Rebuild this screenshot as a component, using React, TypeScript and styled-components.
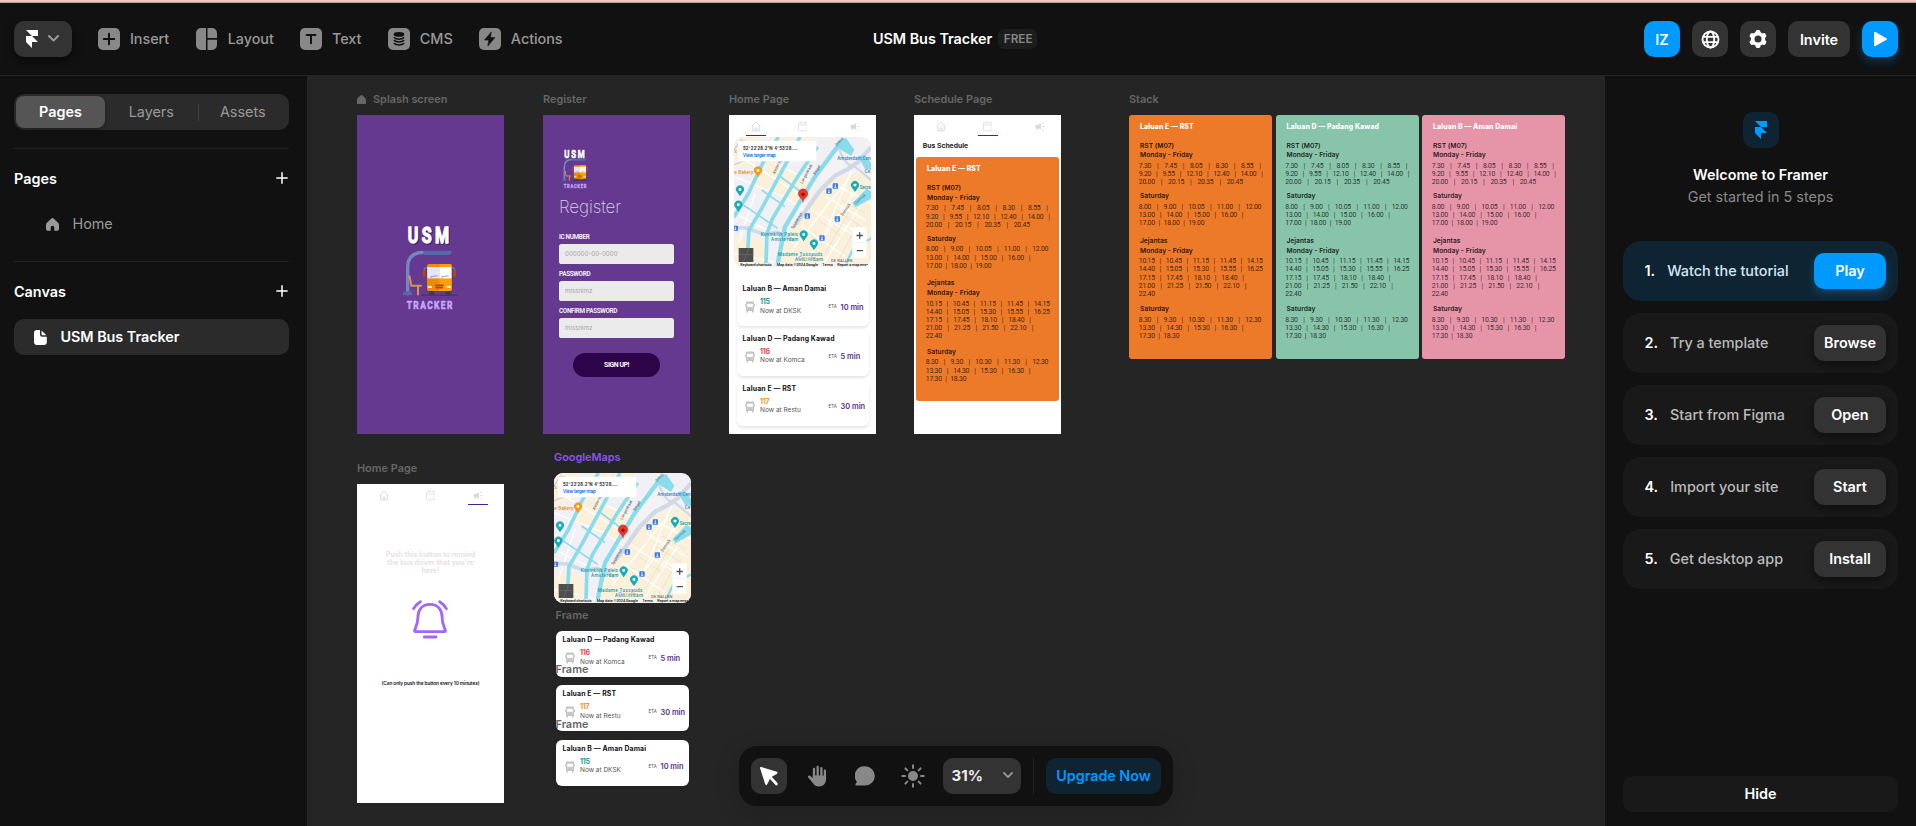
import React from 'react';
import styled, { createGlobalStyle, css } from 'styled-components';

const GlobalStyle = createGlobalStyle`
  * { box-sizing: border-box; }
  html, body { margin: 0; padding: 0; background: #111; }
  body { font-family: Inter, "Liberation Sans", sans-serif; font-size: 14.4px; color: #fff; overflow: hidden; }
  button { font: inherit; border: 0; padding: 0; margin: 0; color: inherit; background: none; }
  svg { display: block; flex: none; }
`;

/* ---------- shell ---------- */

const Shell = styled.div`
  width: 1916px;
  height: 826px;
  display: flex;
  flex-direction: column;
  background: #111;
  border-top: 2px solid #ebc7c0;
`;

const Header = styled.header`
  flex: none;
  height: 74px;
  display: grid;
  grid-template-columns: 1fr auto 1fr;
  align-items: center;
  padding: 0 18px 0 14px;
  border-top: 1px solid #b99c97;
  border-bottom: 1px solid #252525;
`;

const Body = styled.div`
  flex: 1;
  min-height: 0;
  display: flex;
`;

/* ---------- header ---------- */

const Tools = styled.nav`
  display: flex;
  align-items: center;
`;

const LogoButton = styled.button`
  width: 58px;
  height: 36px;
  border-radius: 10px;
  background: #333;
  box-shadow: 0 4px 8px rgba(0, 0, 0, 0.5);
  display: flex;
  align-items: center;
  gap: 10px;
  padding-left: 12px;
  margin-right: 26px;
`;

const Tool = styled.button<{ $gap: number }>`
  display: flex;
  align-items: center;
  gap: 10px;
  margin-right: ${(p) => p.$gap}px;
  color: #999;
  font-weight: 500;
  letter-spacing: -0.05px;
`;

const ToolName = styled.span`
  padding-bottom: 2px;
`;

const Project = styled.div`
  display: flex;
  align-items: center;
  gap: 6px;
  padding: 0 2px 1px 0;
  font-weight: 600;
  letter-spacing: -0.02px;
`;

const Badge = styled.span`
  height: 20px;
  padding: 0 4.5px 0 5.5px;
  border-radius: 6px;
  background: #1d1d1d;
  color: #888;
  font-size: 11.8px;
  font-weight: 600;
  line-height: 20px;
`;

const HeaderActions = styled.div`
  display: flex;
  justify-content: flex-end;
  gap: 12px;
`;

const ActionButton = styled.button<{ $blue?: boolean; $width?: number; $glow?: boolean }>`
  width: ${(p) => p.$width ?? 36}px;
  height: 36px;
  border-radius: 10px;
  display: flex;
  align-items: center;
  justify-content: center;
  font-weight: 600;
  background: ${(p) => (p.$blue ? '#0099ff' : '#333')};
  ${(p) => p.$glow && css`box-shadow: 0 4px 10px rgba(0, 153, 255, 0.3);`}
`;

/* ---------- left sidebar ---------- */

const Sidebar = styled.aside`
  flex: none;
  width: 307px;
  padding: 18px 18px 0 14px;
`;

const Tabs = styled.div`
  height: 36px;
  margin-bottom: 18px;
  padding: 2px;
  border-radius: 10px;
  background: #2b2b2b;
  display: grid;
  grid-template-columns: 89px 92.5px 1px 1fr;
  align-items: center;
`;

const Tab = styled.button<{ $active?: boolean }>`
  height: 32px;
  padding-bottom: 1.5px;
  border-radius: 8px;
  color: ${(p) => (p.$active ? '#fff' : '#999')};
  font-weight: ${(p) => (p.$active ? 600 : 400)};
  background: ${(p) => (p.$active ? '#555' : 'transparent')};
  box-shadow: ${(p) => (p.$active ? '0 2px 5px rgba(0,0,0,.25)' : 'none')};
`;

const TabDivider = styled.i`
  height: 17px;
  background: #444;
`;

const Section = styled.section`
  height: 113px;
  border-top: 1px solid #222;
`;

const SectionTitle = styled.div`
  height: 58px;
  display: flex;
  align-items: center;
  justify-content: space-between;
  padding-right: 1.5px;
  font-weight: 600;
`;

const TreeRow = styled.div<{ $active?: boolean }>`
  height: 36px;
  margin-top: -1px;
  border-radius: 10px;
  display: flex;
  align-items: center;
  color: ${(p) => (p.$active ? '#fff' : '#999')};
  font-weight: ${(p) => (p.$active ? 600 : 400)};
  letter-spacing: -0.05px;
  background: ${(p) => (p.$active ? '#2b2b2b' : 'transparent')};
  padding-left: ${(p) => (p.$active ? 20 : 32)}px;
  gap: ${(p) => (p.$active ? 13.5 : 13.5)}px;
`;

const TreeName = styled.span`
  padding-bottom: 1.5px;
`;

/* ---------- right panel ---------- */

const Panel = styled.aside`
  flex: none;
  width: 311px;
  padding: 36px 18px 14px;
  display: flex;
  flex-direction: column;
  align-items: stretch;
`;

const Welcome = styled.div`
  height: 129px;
  display: flex;
  flex-direction: column;
  align-items: center;
  line-height: 22px;
`;

const WelcomeIcon = styled.div`
  width: 36px;
  height: 36px;
  border-radius: 10px;
  margin-bottom: 16px;
  background: #0f2432;
  display: flex;
  align-items: center;
  justify-content: center;
`;

const Strong = styled.div`
  font-weight: 600;
`;

const Muted = styled.div`
  color: #888;
`;

const Steps = styled.div`
  flex: 1;
  display: flex;
  flex-direction: column;
  gap: 12px;
`;

const Step = styled.div<{ $first?: boolean }>`
  height: 60px;
  flex: none;
  border-radius: 18px;
  background: ${(p) => (p.$first ? '#0f2432' : '#191919')};
  display: flex;
  align-items: center;
  padding: 0 12px 0 21.5px;
`;

const StepNumber = styled.span`
  font-weight: 600;
  margin-right: 12px;
  padding-bottom: 1.5px;
`;

const StepText = styled.span<{ $first?: boolean }>`
  flex: 1;
  font-weight: 500;
  padding-bottom: 1.5px;
  color: ${(p) => (p.$first ? '#d3e8f5' : '#bbb')};
`;

const StepButton = styled.button<{ $first?: boolean }>`
  width: 72px;
  height: 36px;
  padding-bottom: 1.5px;
  border-radius: 10px;
  font-weight: 600;
  background: ${(p) => (p.$first ? '#0099ff' : '#333')};
  box-shadow: 0 4px 9px ${(p) => (p.$first ? 'rgba(0,153,255,.3)' : 'rgba(0,0,0,.45)')};
`;

const HideButton = styled.button`
  height: 36px;
  padding-bottom: 1px;
  border-radius: 10px;
  background: #191919;
  font-weight: 600;
`;

/* ---------- canvas ---------- */

const Canvas = styled.main`
  flex: 1;
  position: relative;
  overflow: hidden;
  background: #252525;
`;

const Node = styled.div<{ $x: number; $y: number; $w: number }>`
  position: absolute;
  left: ${(p) => p.$x}px;
  top: ${(p) => p.$y}px;
  width: ${(p) => p.$w}px;
`;

const NodeLabel = styled.div<{ $purple?: boolean }>`
  height: 18px;
  margin-bottom: 7px;
  display: flex;
  align-items: center;
  gap: 7px;
  font-size: 10.9px;
  font-weight: 600;
  white-space: nowrap;
  color: ${(p) => (p.$purple ? '#8855ee' : '#666')};
  position: relative;
  z-index: 1;
`;

const Artboard = styled.div<{ $bg?: string }>`
  height: 318.5px;
  background: ${(p) => p.$bg ?? '#fff'};
  display: flex;
  flex-direction: column;
  overflow: hidden;
`;

const SplashBoard = styled(Artboard)`
  align-items: center;
  padding: 107.5px 1px 0 0;
`;

const RegisterBoard = styled(Artboard)`
  padding: 33px 16px 0;
`;

const CompactLogo = styled.div`
  padding-left: 2.2px;
`;

const RegisterTitle = styled.div`
  margin-top: 3.5px;
  height: 34.5px;
  font-size: 17px;
  font-weight: 200;
  line-height: 29px;
  letter-spacing: -0.1px;
  color: #dccdea;
`;

const FieldLabel = styled.div`
  height: 10px;
  margin-top: 6.8px;
  font: 700 6.4px/7.5px "Liberation Sans Narrow", Roboto, sans-serif;
  letter-spacing: -0.35px;
  color: #f3ecf8;
`;

const Field = styled.div`
  height: 20px;
  border-radius: 2.6px;
  background: #ebebeb;
  color: #a5a5a5;
  font-size: 6.2px;
  line-height: 19.5px;
  padding-left: 6px;
`;

const SignUp = styled.div`
  width: 87.5px;
  height: 24px;
  margin: 15.2px auto 0;
  border-radius: 12px;
  background: #2d0449;
  text-align: center;
  font: 700 6.8px/24px "Liberation Sans Narrow", Roboto, sans-serif;
  letter-spacing: -0.4px;
`;

const PhoneTabs = styled.div<{ $last: number }>`
  flex: none;
  height: 22px;
  display: grid;
  grid-template-columns: 26.5px 47px ${(p) => p.$last}px;
  color: #d9d9d9;
`;

const PhoneTab = styled.div<{ $active?: boolean }>`
  justify-self: end;
  width: 20px;
  margin-right: -10px;
  height: 20.7px;
  padding-top: 6px;
  display: flex;
  justify-content: center;
  border-bottom: 1.2px solid ${(p) => (p.$active ? '#4a2191' : 'transparent')};
`;

const MapHolder = styled.div`
  width: 137px;
  height: 130px;
  border-radius: 9px;
  overflow: hidden;
  margin: 0 auto;
  flex: none;
`;

const RouteList = styled.div`
  padding: 13px 7.5px 0 8px;
  display: flex;
  flex-direction: column;
  gap: 3.8px;
`;

const RouteCard = styled.div<{ $inset?: boolean }>`
  flex: none;
  height: 46px;
  border-radius: 6px;
  background: #fff;
  padding: 3px 0 0 ${(p) => (p.$inset ? 7 : 5.6)}px;
  box-shadow: 0 2px 3px rgba(0, 0, 0, 0.1);
  color: #222;
`;

const RouteTitle = styled.div`
  height: 12px;
  font-size: 6.9px;
  font-weight: 700;
  line-height: 12px;
  letter-spacing: 0.12px;
  white-space: nowrap;
  color: #111;
`;

const RouteBody = styled.div`
  display: grid;
  grid-template-columns: 15px 68.500px 12px 1fr;
  align-items: center;
  height: 24px;
  padding-left: 2.5px;
  white-space: nowrap;
`;

const RouteInfo = styled.div`
  font-size: 6.5px;
  line-height: 8.5px;
  color: #555;
  padding-bottom: 1px;
`;

const RouteNumber = styled.div<{ $color: string }>`
  font-size: 7px;
  font-weight: 700;
  letter-spacing: -0.3px;
  color: ${(p) => p.$color};
`;

const Eta = styled.span`
  font: 4.6px Roboto, sans-serif;
  color: #555;
  padding-bottom: 1px;
`;

const Minutes = styled.span`
  font-size: 7.4px;
  font-weight: 600;
  color: #55308c;
`;

const ScheduleHeading = styled.div`
  height: 20.4px;
  padding-left: 8.8px;
  font-size: 6.8px;
  font-weight: 700;
  line-height: 18px;
  color: #222;
`;

const Timetable = styled.div<{ $bg: string }>`
  width: 143px;
  height: 244px;
  flex: none;
  border-radius: 3px;
  background: ${(p) => p.$bg};
  padding: 7px 0 0 9.8px;
  color: rgba(0, 0, 0, 0.85);
  white-space: nowrap;
`;

const TimetableTitle = styled.div`
  padding-left: 1.2px;
  height: 10px;
  font-size: 6.9px;
  font-weight: 800;
  line-height: 10px;
  letter-spacing: 0.12px;
  color: #fff;
`;

const DayTitle = styled.div<{ $top: number }>`
  padding-left: 1.2px;
  margin-top: ${(p) => p.$top}px;
  height: 10px;
  font-size: 6.7px;
  font-weight: 600;
  line-height: 10px;
`;

const TimeLine = styled.div<{ $w: number }>`
  width: ${(p) => p.$w}px;
  height: 8.2px;
  display: flex;
  justify-content: space-between;
  font: 400 6.9px/8.2px Roboto, sans-serif;
  letter-spacing: -0.25px;
  color: rgba(0, 0, 0, 0.76);
`;

const Times = styled.div`
  padding-top: 1.7px;
`;

const StackRow = styled.div`
  display: flex;
  gap: 3.5px;
`;

const ScheduleBoard = styled(Artboard)`
  ${Timetable} { margin-left: 2px; }
`;

const ReminderText = styled.div`
  margin-top: 44.8px;
  text-align: center;
  font-size: 7px;
  font-weight: 700;
  line-height: 8.3px;
  color: #e6e3e3;
`;

const BellHolder = styled.div`
  margin-top: 24.7px;
  padding-right: 1px;
  display: flex;
  justify-content: center;
`;

const ReminderNote = styled.div`
  margin-top: 39.5px;
  text-align: center;
  font-size: 4.8px;
  font-weight: 600;
  line-height: 9px;
  letter-spacing: -0.1px;
  color: #111;
`;

/* ---------- floating toolbar ---------- */

const Dock = styled.div`
  position: absolute;
  left: 432px;
  bottom: 20px;
  width: 434px;
  height: 60px;
  padding: 12px;
  border-radius: 18px;
  background: #111;
  box-shadow: 0 6px 24px rgba(0, 0, 0, 0.18);
  display: flex;
  align-items: center;
  z-index: 2;
`;

const DockButton = styled.button<{ $active?: boolean }>`
  width: 36px;
  height: 36px;
  margin-right: 12px;
  border-radius: 10px;
  background: ${(p) => (p.$active ? '#333' : 'transparent')};
  color: ${(p) => (p.$active ? '#fff' : '#888')};
  display: flex;
  align-items: center;
  justify-content: center;
`;

const ZoomSelect = styled.button`
  width: 78px;
  height: 36px;
  border-radius: 10px;
  padding: 0 8px 1px 8.5px;
  background: #333;
  color: #eee;
  font-size: 15px;
  font-weight: 700;
  display: flex;
  align-items: center;
  justify-content: space-between;
`;

const DockDivider = styled.i`
  width: 1px;
  height: 36px;
  margin: 0 12px;
  background: #222;
`;

const Upgrade = styled.button`
  width: 115px;
  height: 36px;
  padding-bottom: 1px;
  border-radius: 10px;
  background: #0f2432;
  color: #0099ff;
  font-weight: 600;
  letter-spacing: -0.05px;
`;

/* ---------- icons ---------- */

const FramerMark = ({ w, h, color }: { w: number; h: number; color: string }) => (
  <svg width={w} height={h} viewBox="0 0 12 18" fill={color}>
    <path d="M0 0h12v6H6zM0 6h6l6 6H6v6l-6-6z" />
  </svg>
);

const Chevron = ({ s = 11, color = '#999' }) => (
  <svg width={s} height={s * 0.64} viewBox="0 0 11 7" fill="none" stroke={color} strokeWidth="2" strokeLinecap="round" strokeLinejoin="round">
    <path d="M1 1l4.5 4.6L10 1" />
  </svg>
);

const Tile = ({ children }: { children?: React.ReactNode }) => (
  <svg width="22" height="22" viewBox="0 0 22 22">
    <rect width="22" height="22" rx="5" fill="#888" />
    {children}
  </svg>
);

const InsertIcon = () => (
  <Tile><path d="M11 5.8v10.4M5.8 11h10.4" stroke="#111" strokeWidth="2" strokeLinecap="round" /></Tile>
);
const TextIcon = () => (
  <Tile><path d="M6.6 6.9h8.8M11 7v8.3" stroke="#111" strokeWidth="2" strokeLinecap="round" /></Tile>
);
const ActionsIcon = () => (
  <Tile><path d="M12.3 3.9 5.5 12h4.3l-.9 6 7-8.4h-4.5z" fill="#111" stroke="#111" strokeWidth=".6" strokeLinejoin="round" /></Tile>
);
const CmsIcon = () => (
  <Tile>
    <ellipse cx="11" cy="6.4" rx="5.3" ry="2.4" fill="#111" />
    <path d="M6.3 9.7c1.6 1.900 7.800 1.900 9.400 0M6.300 12.600c1.600 1.900 7.800 1.900 9.400 0M6.300 15.500c1.600 1.900 7.800 1.900 9.400 0" fill="none" stroke="#111" strokeWidth="1.500" strokeLinecap="round" />
  </Tile>
);
const LayoutIcon = () => (
  <svg width="22" height="22" viewBox="0 0 22 22" fill="#888">
    <path d="M5 0h5v22H5a5 5 0 0 1-5-5V5a5 5 0 0 1 5-5zM11.500 0h4.500a5 5 0 0 1 5 5v5H11.500zM11.500 11.800h9.500V17a5 5 0 0 1-5 5h-4.500z" />
  </svg>
);

const GlobeIcon = () => (
  <svg width="19" height="19" viewBox="0 0 19 19" fill="none" stroke="#fff" strokeWidth="1.9">
    <circle cx="9.500" cy="9.500" r="8" />
    <ellipse cx="9.500" cy="9.500" rx="3.700" ry="8" />
    <path d="M1.800 6.900h15.400M1.800 12.200h15.400" strokeWidth="1.700" />
  </svg>
);

const GearIcon = () => (
  <svg width="20" height="20" viewBox="0 0 20 20">
    <g fill="#fff">
      <circle cx="10" cy="10" r="7.200" />
      {[0, 60, 120, 180, 240, 300].map((a) => (
        <rect key={a} x="7.600" y="1" width="4.800" height="5" rx="1.700" transform={`rotate(${a} 10 10)`} />
      ))}
    </g>
    <circle cx="10" cy="10" r="3.500" fill="#333" />
  </svg>
);

const PlayIcon = () => (
  <svg width="15" height="16" viewBox="0 0 15 16" fill="#fff" stroke="#fff" strokeWidth="2" strokeLinejoin="round">
    <path d="M2 1.800v12.400L13 8z" />
  </svg>
);

const PlusIcon = () => (
  <svg width="12" height="12" viewBox="0 0 12 12" stroke="#fff" strokeWidth="1.500">
    <path d="M6 .3v11.400M.3 6h11.400" />
  </svg>
);

const HomeGlyph = ({ door = true, w = 13, color = '#999' }) => (
  <svg width={w} height={w} viewBox="0 0 13 13" fill={color}>
    {door ? (
      <path d="M5.400.5a1.700 1.700 0 0 1 2.200 0l4.500 4.300q.9.900.9 2v4.200a1.800 1.800 0 0 1-1.800 1.800H8.300V9.600a1.800 1.800 0 0 0-3.600 0v3.200H1.800A1.800 1.800 0 0 1 0 11V6.800q0-1.100.9-2z" />
    ) : (
      <path d="M5.400.5a1.700 1.700 0 0 1 2.200 0l4.500 4.300q.9.900.9 2V13H0V6.800q0-1.100.9-2z" />
    )}
  </svg>
);

const FileIcon = () => (
  <svg width="13" height="15" viewBox="0 0 13 15" fill="#fff">
    <path d="M3 0h3v4.500a2.300 2.300 0 0 0 2.300 2.300h4.500V12a3 3 0 0 1-3 3H3a3 3 0 0 1-3-3V3a3 3 0 0 1 3-3z" />
    <path d="M7.500.4l4.900 4.900H8.600a1.100 1.100 0 0 1-1.100-1.100z" />
  </svg>
);

const CursorIcon = () => (
  <svg width="20" height="20" viewBox="0 0 20 20">
    <path d="M2 2l15.500 4.800-6.400 3.800-3.900 7.400z" fill="#fff" stroke="#fff" strokeWidth="2" strokeLinejoin="round" />
    <path d="M12 12l5.500 6" stroke="#fff" strokeWidth="2.600" strokeLinecap="round" />
  </svg>
);

const HandIcon = () => (
  <svg width="20" height="22" viewBox="0 0 20 22" fill="none" stroke="#888" strokeLinecap="round">
    <path d="M7 12V3.800M10.700 11V1.800M14.400 11V3.200M17.900 12V5.600" strokeWidth="2.300" />
    <path d="M5.600 10.500h13.500V14c0 4.400-3 7.500-7 7.500-3.500 0-5-1.500-6.500-3.700L1.200 12.500c-1-1.600 1-2.800 2.200-1.600l2.400 2.300z" fill="#888" stroke="none" />
  </svg>
);

const ChatIcon = () => (
  <svg width="20" height="20" viewBox="0 0 20 20" fill="#888">
    <path d="M10.300.3a9.600 9.600 0 1 1-.2 19.200H1.600c-1.100 0-1.500-.9-.9-1.700l1.200-1.900A9.600 9.600 0 0 1 10.300.3z" />
  </svg>
);

const SunIcon = () => (
  <svg width="24" height="24" viewBox="0 0 24 24">
    <circle cx="12" cy="12" r="5" fill="#888" />
    {[0, 45, 90, 135, 180, 225, 270, 315].map((a) => (
      <path key={a} d="M12 1.300v2.700" stroke="#888" strokeWidth="2" strokeLinecap="round" transform={`rotate(${a} 12 12)`} />
    ))}
  </svg>
);

const PhoneHome = () => (
  <svg width="10" height="11" viewBox="0 0 20 22" fill="none" stroke="currentColor" strokeWidth="1.800">
    <path d="M1 11L10 2l9 9M3.500 9v11h13V9M8 20v-6h4v6" />
  </svg>
);
const PhoneCalendar = () => (
  <svg width="9.500" height="11" viewBox="0 0 19 22" fill="none" stroke="currentColor" strokeWidth="1.500">
    <rect x="1" y="3.500" width="17" height="16" rx="2" />
    <path d="M1 8h17M5 1v3M14 1v3" />
  </svg>
);
const PhoneHorn = () => (
  <svg width="10" height="11" viewBox="0 0 20 22" fill="currentColor">
    <path d="M1 8h5l6-3.500v13L6 14H5.500l1 4h-3l-1-4H1z" />
    <path d="M14 6l3-3M15 11h4M14 16l3 3" stroke="currentColor" strokeWidth="1.800" />
  </svg>
);

const BusGlyph = () => (
  <svg width="10" height="12" viewBox="0 0 20 24">
    <path d="M4 1h12q2 0 2 2v3h1.500v6H18v8h-1v3h-3v-3H6v3H3v-3H2v-8H.5V6H2V3q0-2 2-2z" fill="#c4c4c4" />
    <path d="M4.500 6h11v5.500h-11zM4.500 16h2M13.500 16h2" fill="#fff" stroke="#fff" strokeWidth="1" />
  </svg>
);

const BellIcon = () => (
  <svg width="36" height="39" viewBox="0 0 108 117" fill="none" stroke="#a265ff" strokeWidth="8.500" strokeLinecap="round" strokeLinejoin="round">
    <path d="M54 13c-25 0-36 18-36 36 0 22-5 30-10 41q-1 5 4 5h84q5 0 4-5c-5-11-10-19-10-41 0-18-11-36-36-36z" />
    <path d="M37 111h35M5 26Q13 12 25 5M103 26Q95 12 83 5" />
  </svg>
);

const BrandFont = '"Liberation Sans Narrow", Roboto, sans-serif';

/* Brand mark: bus stop, bench and bus between two lines of lettering */
const UsmLogo = ({ w, compact = false }: { w: number; compact?: boolean }) => {
  const up = compact ? 18 : 0;
  const top = compact ? 18 : 0;
  return (
    <svg width={w} height={(w * (268 - top)) / 176} viewBox={`0 ${top} 176 ${268 - top}`} fill="none">
      <g fontFamily={BrandFont} fontWeight="700" transform="scale(.72 1)" strokeLinejoin="round">
        <text x="32" y={62 + up} fontSize="67" fill="#3f2067" stroke="#3f2067" strokeWidth="4" textLength="172" lengthAdjust="spacing">USM</text>
        <text x="28" y={59 + up} fontSize="67" fill="#fff" stroke="#fff" strokeWidth="4" textLength="172" lengthAdjust="spacing">USM</text>
        <text x="24" y="259" fontSize="35" fill="#c7a6ff" stroke="#c7a6ff" strokeWidth="1.800" textLength="190" lengthAdjust="spacing">TRACKER</text>
      </g>
      <path d="M20 208V134Q20 88 68 88" stroke="#7488c4" strokeWidth="10" />
      <path d="M68 83h84q0 13-10 13H68z" fill="#566aa9" />
      <path d="M5 217q0-13 13-13h6q10 0 10 13z" fill="#566aa9" />
      <path d="M25 157l6 31h31M51 190v27" stroke="#d9934b" strokeWidth="6" />
      <path d="M60 217h110" stroke="#3d3560" strokeWidth="3" />
      <path d="M85 203h15v13H85zM134 203h14v13h-14z" fill="#3b3a52" />
      <rect x="78" y="123" width="74" height="81" rx="5" fill="#f08a00" />
      <path d="M115 123h32q5 0 5 5v71q0 5-5 5h-32z" fill="#ff9f0a" />
      <path d="M79 132h36v34H79z" fill="#e4e4fb" />
      <path d="M115 132h36v34h-36z" fill="#fff" />
      <path d="M88 164q3-6 22-5M121 164q3-6 22-5" stroke="#8b96b8" strokeWidth="3" />
      <rect x="65" y="142" width="8" height="19" rx="3" fill="#b3470c" />
      <rect x="157" y="142" width="8" height="19" rx="3" fill="#b3470c" />
      <path d="M69 142q0-9 9-8M161 142q0-9-9-8" stroke="#7488c4" strokeWidth="3" />
      <path d="M102 187h26M104 194h22" stroke="#a8500a" strokeWidth="5" />
      <path d="M79 189h14v6H82zM151 189h-14v6h11z" fill="#fff3d0" />
    </svg>
  );
};

const Pin = ({ x, y, c = '#18acb8' }: { x: number; y: number; c?: string }) => (
  <g>
    <path d={`M${x} ${y + 20}l-9-13a12 12 0 1 1 18 0z`} fill={c} />
    <rect x={x - 4} y={y - 5} width="8" height="8" rx="2" fill="#fff" />
  </g>
);

const Station = ({ x, y }: { x: number; y: number }) => (
  <g>
    <rect x={x - 8} y={y - 8} width="16" height="16" rx="2" fill="#3b7be8" />
    <path d={`M${x} ${y - 5}v10M${x - 3} ${y + 4}h6`} stroke="#fff" strokeWidth="2.500" />
  </g>
);

const CityMap = () => (
  <svg width="137" height="130" viewBox="27 81 411 390" preserveAspectRatio="none" fill="none" fontFamily="Roboto, sans-serif">
    <rect x="27" y="81" width="411" height="390" fill="#f1f0f4" />
    <g fill="#fbf1da">
      <path d="M27 81h75l30 30-60 60H27zM80 230l60-80 130 70-40 70-60-30zM27 380h60l30 20v71H27zM130 81l140 0-20 50-50 10z" />
      <path d="M200 350l120-140 118-30v291H150z" />
      <path d="M270 180l60-60 30 50-70 60z" fill="#f3f3f6" />
    </g>
    <g stroke="#fff" strokeWidth="4">
      <path d="M27 200l150 60 60 40M27 310l180 90M90 250l-50 150M150 160l120 60M60 150l160 100M200 420l160-200M240 460l160-230M290 470l120-190M330 330l108 60M260 300l150 90M230 350l130 90M320 220l118 60M380 180l-80 190M27 430l140 30M300 260l120 70" />
    </g>
    <path d="M330 300l80 50M280 330l70 50M350 270l70 40M300 430l70-120M340 450l60-110M250 370l40 30" stroke="#e2dccd" strokeWidth="2" />
    <path d="M438 112l-40 45-28 20-40 20-48 48-42 60-30 40" stroke="#d2d9e4" strokeWidth="13" />
    <path d="M27 352l40 2 45 18 45-5 50 25" stroke="#d2d9e4" strokeWidth="11" />
    <path d="M340 110q20 60 50 60l48 40" stroke="#d2d9e4" strokeWidth="7" />
    <g stroke="#8adbec" strokeWidth="11">
      <path d="M160 81l-45 75-45 95-43 70" />
      <path d="M225 81l-45 85-70 130-38 65-5 80" />
      <path d="M278 110l-60 90-75 125-17 45-3 90" />
      <path d="M345 100l-75 100-90 150-24 121" strokeWidth="13" />
      <path d="M48 280l110 75M160 195l80 60M110 240l70 50" strokeWidth="5" />
      <path d="M438 385l-50 25-25 50" strokeWidth="7" />
    </g>
    <g fill="#8adbec">
      <path d="M338 92l25-8 25 35-10 18-38-22zM398 138l22-2 18 22v22l-18-4zM424 236l14 8v22l-46 26-10-12z" />
    </g>
    <path d="M27 120l20-30 60 15M27 165l40-18" stroke="#c8cfda" strokeWidth="4" />
    <g fill="#4b5260" fontSize="12">
      <text transform="translate(150 192) rotate(-65)">Keizersg</text>
      <text transform="translate(232 222) rotate(-62)">Langestraat</text>
      <text transform="translate(270 196) rotate(-58)">Singel</text>
      <text transform="translate(205 358) rotate(-60)">Spuistraat</text>
      <text transform="translate(353 318) rotate(-55)">Damrak</text>
      <text transform="translate(336 108) rotate(-50)" fontSize="11">Droog</text>
      <text transform="translate(392 284) rotate(-42)" fill="#2b87a0">Damrak</text>
      <text x="318" y="456">DE WALLEN</text>
    </g>
    <g fontSize="14" fontWeight="500">
      <text x="337" y="149" fill="#3a80c8" textLength="100">Amsterdam Cen</text>
      <text x="419" y="188" fill="#3a80c8">Ce</text>
      <text x="28" y="193" fill="#ec8b1c" textLength="57">e Bakery</text>
      <text x="27" y="130" fill="#ec8b1c">'s</text>
      <text x="404" y="236" fill="#189aa8" textLength="33">Secre</text>
      <text x="107" y="377" fill="#189aa8" textLength="112">Koninklijk Paleis</text>
      <text x="138" y="392" fill="#189aa8" textLength="82">Amsterdam</text>
      <text x="158" y="437" fill="#189aa8" textLength="134">Madame Tussauds</text>
      <text x="210" y="453" fill="#189aa8" textLength="84">Amsterdam</text>
    </g>
    <Station x={331} y={228} /><Station x={312} y={243} /><Station x={247} y={318} />
    <Station x={337} y={327} /><Station x={291} y={384} /><Station x={31} y={355} />
    <Pin x={45} y={239} /><Pin x={40} y={285} /><Pin x={390} y={226} /><Pin x={236} y={374} /><Pin x={267} y={401} />
    <Pin x={99} y={182} c="#f29b18" />
    <path d="M234 280q-2-12-10-18a15 15 0 1 1 20 0q-8 6-10 18z" fill="#e8382d" />
    <circle cx="234" cy="253" r="5.500" fill="#9c1510" />
    <text x="220" y="449" fontSize="16" fontWeight="700" stroke="#fff" strokeWidth=".6">
      <tspan fill="#4285f4">G</tspan><tspan fill="#ea4335">o</tspan><tspan fill="#fbbc05">o</tspan><tspan fill="#4285f4">g</tspan><tspan fill="#34a853">l</tspan><tspan fill="#ea4335">e</tspan>
    </text>
    <rect x="39" y="92" width="235" height="62" rx="2" fill="#fff" />
    <text x="54" y="120" fontSize="14" fontWeight="700" fill="#333" textLength="164">52°22'28.2"N 4°53'28....</text>
    <text x="54" y="140" fontSize="14" fill="#1a73e8" stroke="#1a73e8" strokeWidth=".4" textLength="98">View larger map</text>
    <rect x="382" y="352" width="43" height="91" rx="3" fill="#fff" />
    <path d="M404 367v19M394.500 376.500h19M395 422h19" stroke="#555" strokeWidth="4" />
    <path d="M387 398h33" stroke="#e6e6e6" strokeWidth="1.500" />
    <rect x="41" y="414" width="44" height="42" fill="#4c4f4b" />
    <path d="M41 434h44M63 434l-8 22M70 414l-4 20" stroke="#6c706b" strokeWidth="2" />
    <rect x="40" y="459" width="398" height="12" fill="#f4f4f4" fillOpacity=".8" />
    <g fontSize="11.500" fill="#111" fontWeight="500">
      <text x="46" y="469" textLength="94">Keyboard shortcuts</text>
      <text x="155" y="469" textLength="124">Map data ©2024 Google</text>
      <text x="292" y="469" textLength="32">Terms</text>
      <text x="337" y="469" textLength="92">Report a map error</text>
    </g>
  </svg>
);

/* ---------- timetable data ---------- */

type Line = [number, string];
type Block = { top: number; titles: string[]; lines: Line[] };

const blocks: Block[] = [
  {
    top: 8.6,
    titles: ['RST (M07)', 'Monday - Friday'],
    lines: [
      [122, '7.30 | 7.45 | 8.05 | 8.30 | 8.55 |'],
      [124, '9.20 | 9.55 | 12.10 | 12.40 | 14.00 |'],
      [104, '20.00 | 20.15 | 20.35 | 20.45'],
    ],
  },
  {
    top: 4.6,
    titles: ['Saturday'],
    lines: [
      [122.5, '8.00 | 9.00 | 10.05 | 11.00 | 12.00'],
      [104.5, '13.00 | 14.00 | 15.00 | 16.00 |'],
      [65.5, '17.00 | 18.00 | 19.00'],
    ],
  },
  {
    top: 8.3,
    titles: ['Jejantas', 'Monday - Friday'],
    lines: [
      [124, '10.15 | 10.45 | 11.15 | 11.45 | 14.15'],
      [124, '14.40 | 15.05 | 15.30 | 15.55 | 16.25'],
      [105, '17.15 | 17.45 | 18.10 | 18.40 |'],
      [107.5, '21.00 | 21.25 | 21.50 | 22.10 |'],
      [17, '22.40'],
    ],
  },
  {
    top: 6,
    titles: ['Saturday'],
    lines: [
      [122.5, '8.30 | 9.30 | 10.30 | 11.30 | 12.30'],
      [104.5, '13.30 | 14.30 | 15.30 | 16.30 |'],
      [40.5, '17.30 | 18.30'],
    ],
  },
];

const TimetableCard = ({ title, bg }: { title: string; bg: string }) => (
  <Timetable $bg={bg}>
    <TimetableTitle>{title}</TimetableTitle>
    {blocks.map((b, i) => (
      <React.Fragment key={i}>
        {b.titles.map((t, j) => (
          <DayTitle key={t} $top={j === 0 ? b.top : -0.2}>{t}</DayTitle>
        ))}
        <Times>
          {b.lines.map(([width, text]) => (
            <TimeLine key={text} $w={width}>
              {text.split(' ').map((part, k) => <span key={k}>{part}</span>)}
            </TimeLine>
          ))}
        </Times>
      </React.Fragment>
    ))}
  </Timetable>
);

type Route = { title: string; num: string; color: string; at: string; eta: string };
const routeB: Route = { title: 'Laluan B — Aman Damai', num: '115', color: '#1d9a93', at: 'Now at DKSK', eta: '10 min' };
const routeD: Route = { title: 'Laluan D — Padang Kawad', num: '116', color: '#e5484d', at: 'Now at Komca', eta: '5 min' };
const routeE: Route = { title: 'Laluan E — RST', num: '117', color: '#f2951b', at: 'Now at Restu', eta: '30 min' };

const RouteItem = ({ route, inset }: { route: Route; inset?: boolean }) => (
  <RouteCard $inset={inset}>
    <RouteTitle>{route.title}</RouteTitle>
    <RouteBody>
      <BusGlyph />
      <RouteInfo>
        <RouteNumber $color={route.color}>{route.num}</RouteNumber>
        {route.at}
      </RouteInfo>
      <Eta>ETA</Eta>
      <Minutes>{route.eta}</Minutes>
    </RouteBody>
  </RouteCard>
);

const PhoneNav = ({ active, last = 52.5 }: { active: number; last?: number }) => (
  <PhoneTabs $last={last}>
    <PhoneTab $active={active === 0}><PhoneHome /></PhoneTab>
    <PhoneTab $active={active === 1}><PhoneCalendar /></PhoneTab>
    <PhoneTab $active={active === 2}><PhoneHorn /></PhoneTab>
  </PhoneTabs>
);

const steps = [
  ['Watch the tutorial', 'Play'],
  ['Try a template', 'Browse'],
  ['Start from Figma', 'Open'],
  ['Import your site', 'Start'],
  ['Get desktop app', 'Install'],
];

export default function App() {
  return (
    <>
      <GlobalStyle />
      <Shell>
        <Header>
          <Tools>
            <LogoButton><FramerMark w={12} h={18} color="#fff" /><Chevron /></LogoButton>
            <Tool $gap={26.500}><InsertIcon /><ToolName>Insert</ToolName></Tool>
            <Tool $gap={26.200}><LayoutIcon /><ToolName>Layout</ToolName></Tool>
            <Tool $gap={26.500}><TextIcon /><ToolName>Text</ToolName></Tool>
            <Tool $gap={26.200}><CmsIcon /><ToolName>CMS</ToolName></Tool>
            <Tool $gap={0}><ActionsIcon /><ToolName>Actions</ToolName></Tool>
          </Tools>
          <Project>USM Bus Tracker<Badge>FREE</Badge></Project>
          <HeaderActions>
            <ActionButton $blue>IZ</ActionButton>
            <ActionButton><GlobeIcon /></ActionButton>
            <ActionButton><GearIcon /></ActionButton>
            <ActionButton $width={62}>Invite</ActionButton>
            <ActionButton $blue $glow><PlayIcon /></ActionButton>
          </HeaderActions>
        </Header>
        <Body>
          <Sidebar>
            <Tabs>
              <Tab $active>Pages</Tab>
              <Tab>Layers</Tab>
              <TabDivider />
              <Tab>Assets</Tab>
            </Tabs>
            <Section>
              <SectionTitle>Pages<PlusIcon /></SectionTitle>
              <TreeRow><HomeGlyph /><TreeName>Home</TreeName></TreeRow>
            </Section>
            <Section>
              <SectionTitle>Canvas<PlusIcon /></SectionTitle>
              <TreeRow $active><FileIcon /><TreeName>USM Bus Tracker</TreeName></TreeRow>
            </Section>
          </Sidebar>

          <Canvas>
            <Node $x={50} $y={14} $w={147}>
              <NodeLabel><HomeGlyph door={false} w={9} color="#666" />Splash screen</NodeLabel>
              <SplashBoard $bg="#64398f"><UsmLogo w={58.700} /></SplashBoard>
            </Node>

            <Node $x={236} $y={14} $w={147}>
              <NodeLabel>Register</NodeLabel>
              <RegisterBoard $bg="#64398f">
                <CompactLogo><UsmLogo w={29} compact /></CompactLogo>
                <RegisterTitle>Register</RegisterTitle>
                <FieldLabel>IC NUMBER</FieldLabel>
                <Field>000000-00-0000</Field>
                <FieldLabel>PASSWORD</FieldLabel>
                <Field>missnimz</Field>
                <FieldLabel>CONFIRM PASSWORD</FieldLabel>
                <Field>missnimz</Field>
                <SignUp>SIGN UP!</SignUp>
              </RegisterBoard>
            </Node>

            <Node $x={422} $y={14} $w={147}>
              <NodeLabel>Home Page</NodeLabel>
              <Artboard>
                <PhoneNav active={0} />
                <MapHolder><CityMap /></MapHolder>
                <RouteList>
                  <RouteItem route={routeB} />
                  <RouteItem route={routeD} />
                  <RouteItem route={routeE} />
                </RouteList>
              </Artboard>
            </Node>

            <Node $x={607} $y={14} $w={147}>
              <NodeLabel>Schedule Page</NodeLabel>
              <ScheduleBoard>
                <PhoneNav active={1} />
                <ScheduleHeading>Bus Schedule</ScheduleHeading>
                <TimetableCard title="Laluan E — RST" bg="#ec7a28" />
              </ScheduleBoard>
            </Node>

            <Node $x={822} $y={14} $w={436}>
              <NodeLabel>Stack</NodeLabel>
              <StackRow>
                <TimetableCard title="Laluan E — RST" bg="#ec7a28" />
                <TimetableCard title="Laluan D — Padang Kawad" bg="#88c4a9" />
                <TimetableCard title="Laluan B — Aman Damai" bg="#e694a8" />
              </StackRow>
            </Node>

            <Node $x={50} $y={383} $w={147}>
              <NodeLabel>Home Page</NodeLabel>
              <Artboard>
                <PhoneNav active={2} last={47.500} />
                <ReminderText>Push this button to remind<br />the bus driver that you're<br />here!</ReminderText>
                <BellHolder><BellIcon /></BellHolder>
                <ReminderNote>(Can only push the button every 10 minutes)</ReminderNote>
              </Artboard>
            </Node>

            <Node $x={247} $y={372} $w={137}>
              <NodeLabel $purple>GoogleMaps</NodeLabel>
              <MapHolder><CityMap /></MapHolder>
            </Node>

            <Node $x={248.500} $y={530} $w={133.500}>
              <NodeLabel>Frame</NodeLabel>
              <RouteItem route={routeD} inset />
            </Node>
            <Node $x={248.500} $y={584.300} $w={133.500}>
              <NodeLabel>Frame</NodeLabel>
              <RouteItem route={routeE} inset />
            </Node>
            <Node $x={248.500} $y={638.500} $w={133.500}>
              <NodeLabel>Frame</NodeLabel>
              <RouteItem route={routeB} inset />
            </Node>

            <Dock>
              <DockButton $active><CursorIcon /></DockButton>
              <DockButton><HandIcon /></DockButton>
              <DockButton><ChatIcon /></DockButton>
              <DockButton><SunIcon /></DockButton>
              <ZoomSelect>31%<Chevron s={10} /></ZoomSelect>
              <DockDivider />
              <Upgrade>Upgrade Now</Upgrade>
            </Dock>
          </Canvas>

          <Panel>
            <Welcome>
              <WelcomeIcon><FramerMark w={12} h={18} color="#0099ff" /></WelcomeIcon>
              <Strong>Welcome to Framer</Strong>
              <Muted>Get started in 5 steps</Muted>
            </Welcome>
            <Steps>
              {steps.map(([text, action], i) => (
                <Step key={text} $first={i === 0}>
                  <StepNumber>{i + 1}.</StepNumber>
                  <StepText $first={i === 0}>{text}</StepText>
                  <StepButton $first={i === 0}>{action}</StepButton>
                </Step>
              ))}
            </Steps>
            <HideButton>Hide</HideButton>
          </Panel>
        </Body>
      </Shell>
    </>
  );
}
